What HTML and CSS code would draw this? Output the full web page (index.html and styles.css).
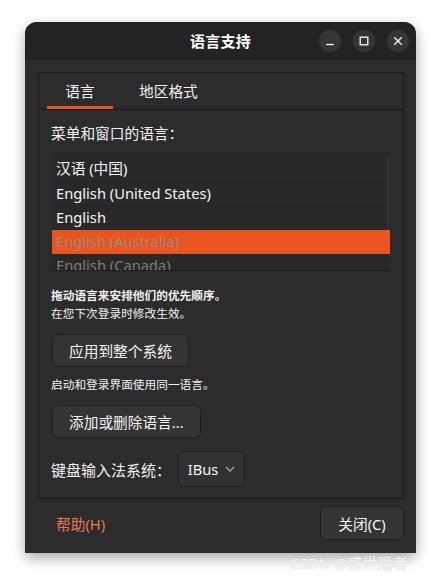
FILE: index.html
```html
<!DOCTYPE html>
<html lang="zh-CN">
<head>
<meta charset="utf-8">
<title>语言支持</title>
<link rel="stylesheet" href="styles.css">
</head>
<body>
<div class="window">
  <header class="headerbar">
    <div></div>
    <div class="title">语言支持</div>
    <div class="controls">
      <span class="ctl"><svg width="10" height="10" viewBox="0 0 10 10"><path d="M1 8.5h8" stroke="#fff" stroke-width="1.3"/></svg></span>
      <span class="ctl"><svg width="10" height="10" viewBox="0 0 10 10"><rect x="1.2" y="1.2" width="7.6" height="7.6" fill="none" stroke="#fff" stroke-width="1.3"/></svg></span>
      <span class="ctl"><svg width="10" height="10" viewBox="0 0 10 10"><path d="M1.2 1.2l7.6 7.6M8.8 1.2l-7.6 7.6" stroke="#fff" stroke-width="1.3"/></svg></span>
    </div>
  </header>
  <div class="main">
    <div class="notebook">
      <div class="tabs">
        <div class="tab active">语言</div>
        <div class="tab second">地区格式</div>
      </div>
      <div class="page">
        <div class="label">菜单和窗口的语言：</div>
        <div class="list">
          <div class="row first">汉语 (中国)</div>
          <div class="row">English (United States)</div>
          <div class="row">English</div>
          <div class="row selected">English (Australia)</div>
          <div class="row dim">English (Canada)</div>
          <div class="scrollbar"></div>
        </div>
        <div class="hint bold">拖动语言来安排他们的优先顺序。</div>
        <div class="hint">在您下次登录时修改生效。</div>
        <div class="btnrow"><button class="btn">应用到整个系统</button></div>
        <div class="hint mid">启动和登录界面使用同一语言。</div>
        <div class="btnrow"><button class="btn">添加或删除语言...</button></div>
        <div class="imrow">
          <span class="imlabel">键盘输入法系统：</span>
          <button class="combo">IBus <svg width="10" height="6" viewBox="0 0 10 6"><path d="M1 1l4 4 4-4" fill="none" stroke="#aaa" stroke-width="1.3"/></svg></button>
        </div>
      </div>
    </div>
    <div class="footer">
      <span class="help">帮助(H)</span>
      <button class="btn close">关闭(C)</button>
    </div>
  </div>
</div>
<div class="watermark">CSDN @盛世隐者</div>
</body>
</html>
```
FILE: styles.css
```css
html, body {
  margin: 0;
  padding: 0;
  background: #ffffff;
  width: 442px;
  height: 581px;
  overflow: hidden;
  font-family: "Noto Sans", "Noto Sans CJK SC", sans-serif;
  color: #f2f2f2;
}
.window {
  margin: 22px 0 0 25px;
  width: 391px;
  height: 531px;
  background: #2c2c2c;
  border-radius: 12px 12px 0 0;
  box-shadow: 0 5px 14px rgba(0,0,0,0.35);
  display: flex;
  flex-direction: column;
}
.headerbar {
  height: 37px;
  background: #232323;
  border-bottom: 1px solid #1c1c1c;
  border-radius: 12px 12px 0 0;
  display: grid;
  grid-template-columns: 1fr auto 1fr;
  align-items: center;
}
.title {
  font-weight: bold;
  font-size: 15px;
  color: #fff;
  letter-spacing: 0.2px;
}
.controls {
  display: flex;
  justify-content: flex-end;
  gap: 12px;
  padding-right: 7px;
}
.ctl {
  width: 22px;
  height: 22px;
  border-radius: 50%;
  background: #353535;
  display: flex;
  align-items: center;
  justify-content: center;
}
.main {
  flex: 1;
  display: flex;
  flex-direction: column;
  padding: 12px 12px 0 13px;
}
.notebook {
  height: 425px;
  border: 1px solid #1b1b1b;
  display: flex;
  flex-direction: column;
}
.tabs {
  height: 36px;
  border-bottom: 1px solid #1b1b1b;
  display: flex;
  padding-left: 8px;
  font-size: 14.7px;
}
.tab {
  display: flex;
  align-items: center;
  justify-content: center;
  color: #f2f2f2;
  white-space: nowrap;
  box-sizing: border-box;
  border-bottom: 3px solid transparent;
  padding-top: 2px;
}
.tab.active {
  width: 66px;
  border-bottom-color: #e95420;
}
.tab.second {
  margin-left: 8px;
  padding-left: 18px;
  padding-right: 18px;
}
.page {
  padding: 0 13px 0 12px;
  font-size: 14.7px;
}
.label {
  margin-top: 12px;
  height: 22px;
  line-height: 22px;
}
.list {
  position: relative;
  margin-top: 9px;
  margin-left: 1px;
  height: 116px;
  overflow: hidden;
  border-top: 1px solid #242424;
  border-bottom: 1px solid #1c1c1c;
  background: #292929;
}
.row {
  height: 23px;
  line-height: 23px;
  padding-left: 4px;
  border-bottom: 1px solid #252525;
  color: #f4f4f4;
}
.row.first {
  height: 27px;
  line-height: 28px;
}
.row.selected {
  background: #e95420;
  color: #9c8a82;
  border-bottom-color: #e95420;
}
.row.dim {
  color: #7d7d7d;
}
.scrollbar {
  position: absolute;
  right: 1px;
  top: 3px;
  width: 2px;
  height: 85px;
  background: rgba(255,255,255,0.05);
}
.hint {
  font-size: 11.7px;
  line-height: 18px;
}
.hint.bold {
  font-weight: bold;
  margin-top: 15px;
}
.hint.mid {
  margin-top: 8px;
}
.btnrow {
  margin-top: 12px;
  display: flex;
}
.btn {
  font-family: "Noto Sans", "Noto Sans CJK SC", sans-serif;
  font-size: 14.7px;
  color: #f4f4f4;
  background: #343434;
  border: 1px solid #1f1f1f;
  border-radius: 6px;
  height: 33px;
  padding: 0 16px;
  margin-left: 1px;
}
.imrow {
  margin-top: 13px;
  display: flex;
  align-items: center;
  gap: 7px;
}
.imlabel {
  font-size: 15px;
}
.combo {
  font-family: "Noto Sans", "Noto Sans CJK SC", sans-serif;
  font-size: 14.7px;
  color: #f4f4f4;
  background: #313131;
  border: 1px solid #1f1f1f;
  border-radius: 6px;
  height: 36px;
  width: 67px;
  display: flex;
  align-items: center;
  justify-content: center;
  gap: 7px;
  padding: 0;
}
.footer {
  display: flex;
  justify-content: space-between;
  align-items: center;
  margin-top: 7px;
}
.help {
  color: #e77a52;
  font-size: 14.7px;
  margin-left: 18px;
}
.btn.close {
  width: 84px;
  height: 34px;
  padding: 0;
}
.watermark {
  position: absolute;
  left: 290px;
  top: 552px;
  font-family: "Noto Sans", "Noto Sans CJK SC", sans-serif;
  font-size: 15px;
  color: #f4f4f4;
  text-shadow: 0 0 1px #c8c8c8;
}
```
